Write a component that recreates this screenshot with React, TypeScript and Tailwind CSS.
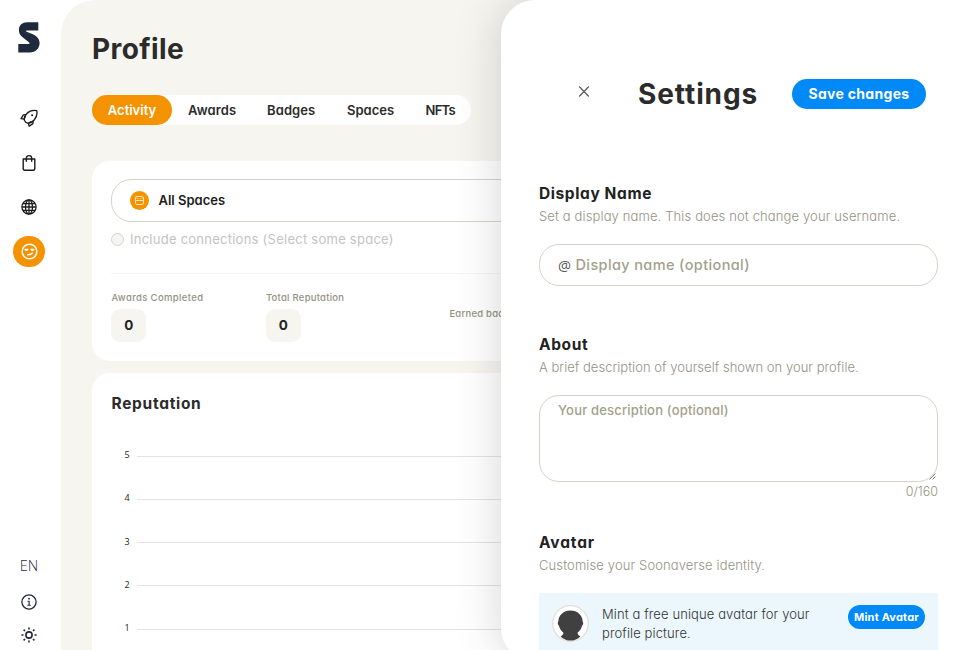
import type { ReactNode } from "react";

function Logo() {
  return (
    <svg width="22" height="32" viewBox="0 0 22 32" fill="#1e293b">
      <path d="M9 1.3H20.3V9.6H8.9C7.4 9.6 7.5 10.4 8.7 10.8L14.8 13.2C19.3 15.2 21.6 18.3 21.6 22C21.6 27.6 17.4 31.4 11.8 31.4H.3V23H10.3C11.8 23 11.9 22.2 10.9 21.3L4.3 16C2 14.1.9 11.8.9 8.9C.9 4.4 4.4 1.3 9 1.3Z" />
      <path d="M3.6 10.2C6 12 9.5 12 12.5 13.6M19 19.8C17 18 15 17.6 12.5 16.2" stroke="#3c4759" strokeWidth=".5" fill="none" />
    </svg>
  );
}

function RocketIcon() {
  return (
    <svg width="18" height="18" viewBox="0 0 18 18" fill="none" stroke="#1c1c1c" strokeWidth="1.35" strokeLinejoin="round" strokeLinecap="round">
      <path d="M16.7 1.7C13.2.9 9.4 2 6.9 4.5C4.7 6.7 3.7 9.2 4.5 11.4C5 13 6.2 13.9 7.8 14.1C10.1 14.3 12.4 13.1 14.2 11C16.5 8.3 17.5 4.9 16.7 1.7Z" />
      <path d="M5.9 5.6L3.4 5.9L1 9.7L4.1 10.2L5.3 7.2" />
      <path d="M13 12.2L12.9 14.6L9.2 17.2L8.4 14.3L11.1 12.7" />
      <circle cx="12.1" cy="6.2" r="1" fill="#1c1c1c" stroke="none" />
    </svg>
  );
}

function BagIcon() {
  return (
    <svg width="16" height="18" viewBox="0 0 16 18" fill="none" stroke="#1c1c1c" strokeWidth="1.4" strokeLinejoin="round" strokeLinecap="round">
      <path d="M2.2 5H13.8V14.4Q13.8 16.2 12 16.2H4Q2.2 16.2 2.2 14.4Z" />
      <path d="M5.3 7.2V4.2C5.3 .8 10.7 .8 10.7 4.2V7.2" />
    </svg>
  );
}

function GlobeIcon() {
  return (
    <svg width="16" height="16" viewBox="0 0 16 16" fill="none" stroke="#1c1c1c" strokeWidth="1.3">
      <circle cx="8" cy="8" r="7.1" />
      <ellipse cx="8" cy="8" rx="3.5" ry="7.1" />
      <path d="M8 1V15M1 8H15M2 4.6H14M2 11.4H14" />
    </svg>
  );
}

function SmirkIcon() {
  return (
    <svg width="17" height="17" viewBox="0 0 17 17" fill="none" stroke="#fff" strokeWidth="1.5" strokeLinecap="round">
      <circle cx="8.5" cy="8.5" r="7.3" />
      <path d="M4 6.5H6.8M10 6.5H12.8" />
      <path d="M4.6 7.5H6.2M10.6 7.5H12.2" strokeWidth="1" />
      <path d="M6.6 11.7C8.6 11.9 10.3 11.3 11.4 10" />
    </svg>
  );
}

function InfoIcon() {
  return (
    <svg width="16" height="16" viewBox="0 0 16 16" fill="none" stroke="#1e293b" strokeWidth="1.3">
      <circle cx="8" cy="8" r="7.1" />
      <path d="M6.6 7.2H8.1V11.2M6.4 11.3H9.7" strokeWidth="1.1" />
      <circle cx="8" cy="4.7" r=".9" fill="#1e293b" stroke="none" />
    </svg>
  );
}

function SunIcon() {
  return (
    <svg width="16" height="16" viewBox="0 0 16 16" fill="none" stroke="#1e293b" strokeWidth="1.6">
      <circle cx="8" cy="8" r="3.1" />
      <path d="M8 .4V2.5M8 13.5V15.6M.4 8H2.5M13.5 8H15.6M2.6 2.6L4 4M12 12L13.4 13.4M2.6 13.4L4 12M12 4L13.4 2.6" />
    </svg>
  );
}

function SpaceIcon() {
  return (
    <span className="flex size-[19px] items-center justify-center rounded-full bg-[#f59200]">
      <svg width="11" height="11" viewBox="0 0 11 11" fill="none" stroke="#fde3b8" strokeWidth="1">
        <rect x="1.5" y="1.5" width="8" height="8" rx="1.4" />
        <path d="M1.5 5.5H9.5" />
        <path d="M1.5 3.5H9.5" strokeOpacity=".35" />
      </svg>
    </span>
  );
}

function AvatarIcon() {
  return (
    <svg width="37" height="37" viewBox="0 0 37 37">
      <circle cx="18.5" cy="18.5" r="17.8" fill="#fff" stroke="#e0dfd0" strokeWidth="1.2" />
      <path d="M18.5 5.6C11.5 5.6 6.6 10.4 6.3 16.5C5.4 17.8 5.6 19.7 6.9 20.6C7.6 23.7 9.2 26.2 11.5 27.8C11.4 29.6 9.9 30.5 8.6 31.4C11.3 34.1 14.7 35.6 18.5 35.6C22.3 35.6 25.7 34.1 28.4 31.4C27.1 30.5 25.6 29.6 25.5 27.8C27.8 26.2 29.4 23.7 30.1 20.6C31.4 19.7 31.6 17.8 30.7 16.5C30.4 10.4 25.5 5.6 18.5 5.6Z" fill="#404040" />
    </svg>
  );
}

function Stat({ label, tracking, width }: { label: string; tracking: string; width: string }) {
  return (
    <div className={width}>
      <div className={`text-[9.5px] leading-[12px] font-medium text-[#959282] ${tracking}`}>{label}</div>
      <div className="mt-[5px] flex h-[33px] w-[35px] items-center justify-center rounded-[9px] bg-[#f6f5f0] text-[13.5px] font-bold text-[#222]">
        0
      </div>
    </div>
  );
}

function Heading({ children, tracking }: { children: ReactNode; tracking: string }) {
  return <h3 className={`text-[15.5px] leading-[24px] font-bold text-[#222] ${tracking}`}>{children}</h3>;
}

const axis = ["5", "4", "3", "2", "1"];

function Sidebar() {
  return (
    <aside className="flex w-[61px] shrink-0 flex-col items-center bg-white pr-[3px]">
      <div className="mt-[21px] h-[32px]"><Logo /></div>
      <nav className="mt-[57px] flex flex-col items-center">
        <span className="flex h-[16px] items-center"><RocketIcon /></span>
        <span className="mt-[28px] flex h-[18px] items-center"><BagIcon /></span>
        <span className="mt-[27px] flex h-[16px] items-center"><GlobeIcon /></span>
        <span className="mt-[21px] flex h-[31px] w-[32px] items-center justify-center rounded-full bg-[#f59200]"><SmirkIcon /></span>
      </nav>
      <div className="mt-auto flex h-[95px] flex-col items-center">
        <span className="font-['Open_Sans'] text-[14.5px] leading-[21px] font-light text-[#1e293b]">EN</span>
        <span className="mt-[18px]"><InfoIcon /></span>
        <span className="mt-[17px]"><SunIcon /></span>
      </div>
    </aside>
  );
}

function Profile() {
  return (
    <main className="flex h-[650px] flex-1 flex-col overflow-hidden rounded-tl-[34px] bg-[#f6f5f0] pl-[31px]">
      <h1 className="mt-[31px] text-[28px] leading-[36px] font-bold tracking-[0.4px] text-[#2b2b2b]">Profile</h1>
      <div className="mt-[28px] flex h-[30px] w-[379px] items-center rounded-full bg-white text-[13px] leading-[30px] font-semibold text-[#2b2b2b]">
        <span className="flex h-[30px] w-[80px] items-center justify-center rounded-full bg-[#f59200] text-white">Activity</span>
        <span className="ml-[16px] w-[79px] tracking-[0.1px]">Awards</span>
        <span className="w-[80px] tracking-[0.1px]">Badges</span>
        <span className="w-[78.5px]">Spaces</span>
        <span className="tracking-[-0.7px]">NFTs</span>
      </div>

      <section className="mt-[36px] h-[200px] w-[600px] shrink-0 rounded-[18px] bg-white pt-[18px] pl-[19px]">
        <div className="flex h-[43px] items-center gap-[9.5px] rounded-[20px] border border-[#d3d4c8] pl-[18px] text-[13px] font-semibold text-[#1c1c1c]">
          <SpaceIcon />
          All Spaces
        </div>
        <div className="mt-[8px] flex h-[19px] items-center gap-[6px] text-[13px] tracking-[0.25px] text-[#c3c3c3]">
          <span className="size-[13px] rounded-full border border-[#d5d5cd] bg-[#f5f5f5]" />
          Include connections (Select some space)
        </div>
        <div className="mt-[24px] h-px bg-[#f6f5f1]" />
        <div className="mt-[18px] flex pl-[0.4px]">
          <Stat label="Awards Completed" tracking="tracking-[0.36px]" width="w-[154.5px]" />
          <Stat label="Total Reputation" tracking="tracking-[0.25px]" width="w-[183.5px]" />
          <div className="mt-[15.5px] text-[9.5px] leading-[12px] font-medium tracking-[0.23px] whitespace-nowrap text-[#959282]">Earned badges</div>
        </div>
      </section>

      <section className="mt-[12px] w-[600px] flex-1 rounded-t-[18px] bg-white pt-[19px] pl-[19px]">
        <h2 className="pl-[0.5px] text-[15.5px] leading-[24px] font-bold tracking-[0.7px] text-[#2b2b2b]">Reputation</h2>
        <div className="mt-[29px]">
          {axis.map((n) => (
            <div key={n} className="flex h-[43.25px] items-start">
              <span className="w-[26px] pl-[13.5px] font-['Open_Sans'] text-[9px] leading-[20px] text-[#222]">{n}</span>
              <span className="mt-[10.5px] h-px flex-1 bg-[#e2e3e6]" />
            </div>
          ))}
        </div>
      </section>
    </main>
  );
}

function SettingsDrawer() {
  return (
    <div className="absolute top-0 left-[501px] h-[662px] w-[470px] rounded-l-[34px] bg-white pr-[33px] pl-[38px] shadow-[0_0_48px_rgba(0,0,0,0.17)]">
      <header className="flex h-[116px] items-start pt-[72px]">
        <svg className="mt-[14px] ml-[39px]" width="12" height="11" viewBox="0 0 12 11" stroke="#555" strokeWidth="1.1">
          <path d="M1.2.5L10.8 10.5M10.8.5L1.2 10.5" />
        </svg>
        <h2 className="ml-[48px] w-[154px] pt-px text-[28px] leading-[43px] font-bold tracking-[0.9px] text-[#2b2b2b]">Settings</h2>
        <button className="mt-[7px] h-[30px] w-[134px] rounded-full bg-[#0089f7] text-[14px] leading-[30px] font-bold tracking-[0.3px] whitespace-nowrap text-white">Save changes</button>
      </header>

      <div className="mt-[66px]">
        <Heading tracking="tracking-[0.6px]">Display Name</Heading>
        <p className="text-[13px] leading-[21px] font-light tracking-[0.13px] text-[#959282]">Set a display name. This does not change your username.</p>
        <div className="mt-[17px] flex h-[42px] items-center rounded-[20px] border border-[#d3d4c8] pl-[18px]">
          <span className="w-[17.5px] pt-[2px] font-['Open_Sans'] text-[14.5px] leading-[20px] text-[#555]">@</span>
          <span className="text-[14.5px] leading-[20px] font-medium tracking-[0.38px] text-[#a39f8c]">Display name (optional)</span>
        </div>
      </div>

      <div className="mt-[47px]">
        <Heading tracking="tracking-[0.6px]">About</Heading>
        <p className="text-[13px] leading-[20px] font-light tracking-[0.03px] text-[#959282]">A brief description of yourself shown on your profile.</p>
        <div className="mt-[18px] flex h-[87px] justify-between rounded-[20px] border border-[#d3d4c8] pl-[18px]">
          <span className="mt-[4px] text-[13px] leading-[20px] font-medium tracking-[0.19px] text-[#a39f8c]">Your description (optional)</span>
          <svg className="mr-[1px] mb-[1px] self-end" width="7" height="7" viewBox="0 0 7 7" stroke="#666" strokeWidth=".9">
            <path d="M.5 6.5L6.5 .5M3.5 6.5L6.5 3.5" />
          </svg>
        </div>
        <p className="text-right text-[12.5px] leading-[19px] font-light text-[#959282]">0/160</p>
      </div>

      <div className="mt-[30px]">
        <Heading tracking="tracking-[0.85px]">Avatar</Heading>
        <p className="text-[13px] leading-[21px] font-light tracking-[0.12px] text-[#959282]">Customise your Soonaverse identity.</p>
        <div className="mt-[17px] flex h-[68px] items-start bg-[#ebf7fc] px-[13px] pt-[12px]">
          <AvatarIcon />
          <p className="ml-[13px] w-[246px] text-[13px] leading-[18.5px] font-light tracking-[0.11px] text-[#333]">
            Mint a free unique avatar for your
            <br />
            profile picture.
          </p>
          <button className="h-[24px] flex-1 rounded-full bg-[#0089f7] text-[11px] leading-[24px] font-bold tracking-[0.2px] whitespace-nowrap text-white">Mint Avatar</button>
        </div>
      </div>
    </div>
  );
}

export default function App() {
  return (
    <div className="relative flex h-[650px] w-[971px] overflow-hidden bg-white font-['Inter',sans-serif] [font-feature-settings:'cv11']">
      <Sidebar />
      <Profile />
      <SettingsDrawer />
    </div>
  );
}
